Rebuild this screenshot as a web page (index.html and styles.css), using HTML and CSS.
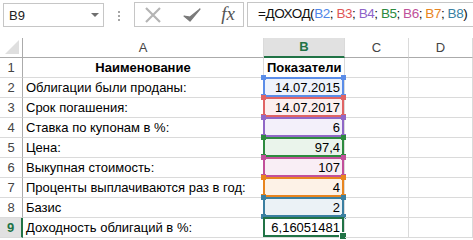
FILE: index.html
```html
<!DOCTYPE html>
<html lang="ru">
<head>
<meta charset="utf-8">
<link rel="stylesheet" href="styles.css">
</head>
<body>
<div class="fbar">
  <div class="namebox"><span>B9</span><span class="dd"></span></div>
  <div class="grip"><i></i><i></i><i></i></div>
  <div class="btns">
    <svg class="ic" width="20" height="20" viewBox="0 0 20 20"><path d="M3 3L17 17M17 3L3 17" stroke="#b4b4b4" stroke-width="2.2" fill="none"/></svg>
    <svg class="ic" width="20" height="20" viewBox="0 0 20 20"><path d="M2 11L8 16L18 4L8 12Z" fill="#7a7a7a" stroke="#7a7a7a" stroke-width="1.2" stroke-linejoin="round"/></svg>
    <span class="fx">fx</span>
  </div>
  <div class="finput">=ДОХОД(<span class="c1">B2</span>; <span class="c2">B3</span>; <span class="c3">B4</span>; <span class="c4">B5</span>; <span class="c5">B6</span>; <span class="c6">B7</span>; <span class="c7">B8</span>)</div>
</div>
<div class="sheet">
  <div class="ch corner"><span class="tri"></span></div>
  <div class="ch">A</div>
  <div class="ch sel">B</div>
  <div class="ch">C</div>
  <div class="ch">D</div>

  <div class="rh">1</div><div class="c bold ctr">Наименование</div><div class="c bold ctr">Показатели</div><div class="c"></div><div class="c"></div>
  <div class="rh">2</div><div class="c">Облигации были проданы:</div><div class="c num r r1">14.07.2015</div><div class="c"></div><div class="c"></div>
  <div class="rh">3</div><div class="c">Срок погашения:</div><div class="c num r r2">14.07.2017</div><div class="c"></div><div class="c"></div>
  <div class="rh">4</div><div class="c">Ставка по купонам в %:</div><div class="c num r r3">6</div><div class="c"></div><div class="c"></div>
  <div class="rh">5</div><div class="c">Цена:</div><div class="c num r r4">97,4</div><div class="c"></div><div class="c"></div>
  <div class="rh">6</div><div class="c">Выкупная стоимость:</div><div class="c num r r5">107</div><div class="c"></div><div class="c"></div>
  <div class="rh">7</div><div class="c">Проценты выплачиваются раз в год:</div><div class="c num r r6">4</div><div class="c"></div><div class="c"></div>
  <div class="rh">8</div><div class="c">Базис</div><div class="c num r r7">2</div><div class="c"></div><div class="c"></div>
  <div class="rh sel">9</div><div class="c">Доходность облигаций в %:</div><div class="c num act">6,16051481</div><div class="c"></div><div class="c"></div>
</div>
</body>
</html>
```
FILE: styles.css
```css
* { box-sizing: border-box; }
html, body { margin: 0; padding: 0; background: #fff; }
body {
  width: 473px; height: 240px; overflow: hidden;
  font-family: "Liberation Sans", Arial, sans-serif;
  font-size: 13px; color: #000;
}
.fbar { display: flex; align-items: flex-start; padding: 2px 0 0 3px; height: 38px; }
.namebox, .grip, .btns { flex-shrink: 0; }
.namebox {
  width: 101px; height: 24px; margin-top: 1px;
  border: 1px solid #c6c6c6; display: flex; align-items: center;
  justify-content: space-between; padding: 0 4px 0 5px; font-size: 13px; color: #222;
}
.dd { width: 0; height: 0; border-left: 4px solid transparent; border-right: 4px solid transparent; border-top: 4px solid #6f6f6f; }
.grip { width: 30px; display: flex; flex-direction: column; align-items: center; gap: 2px; padding-top: 9px; }
.grip i { width: 2px; height: 2px; background: #a6a6a6; display: block; }
.btns {
  width: 110px; height: 25px; border: 1px solid #c6c6c6;
  display: flex; align-items: center; justify-content: space-between; padding: 0 8px 0 8px;
}
.fx { font-family: "Liberation Serif", serif; font-style: italic; font-size: 19px; color: #555; margin-top: -2px; }
.finput {
  flex: 1 1 auto; min-width: 0; overflow: hidden; height: 25px; margin-left: 3px;
  border: 1px solid #c6c6c6; border-right: 0;
  padding: 3px 0 0 10px; font-size: 13.5px; letter-spacing: -0.45px; color: #111; white-space: nowrap;
}
.c1 { color: #4f86e8; } .c2 { color: #e05555; } .c3 { color: #8e63c8; }
.c4 { color: #2b8a3e; } .c5 { color: #c0509a; } .c6 { color: #e88421; } .c7 { color: #3a7fa3; }

.sheet {
  display: grid;
  grid-template-columns: 23px 241px 81px 64px 64px;
  grid-template-rows: 20px repeat(9, 20px);
}
.ch {
  border-right: 1px solid #dadada; border-bottom: 1px solid #ababab;
  text-align: center; font-size: 13px; color: #444; line-height: 19px; position: relative;
}
.ch.sel { background: #e1e1e1; color: #217346; font-weight: bold; border-bottom: 2px solid #217346; line-height: 18px; }
.corner { border-right: 1px solid #ababab; }
.tri {
  position: absolute; right: 3px; bottom: 3px; width: 0; height: 0;
  border-left: 14px solid transparent; border-bottom: 14px solid #dfdfdf;
}
.rh {
  border-right: 1px solid #ababab; border-bottom: 1px solid #dadada;
  text-align: center; color: #444; line-height: 19px; font-size: 13px;
}
.rh.sel { background: #e1e1e1; color: #217346; font-weight: bold; border-right: 2px solid #217346; }
.c {
  border-right: 1px solid #dadada; border-bottom: 1px solid #dadada;
  padding: 0 3px; line-height: 19px; white-space: nowrap; overflow: visible; position: relative;
}
.bold { font-weight: bold; }
.ctr { text-align: center; }
.num { text-align: right; padding-right: 4px; }
.r { --c: #4f86e8; background: #eef3fc; }
.r::before {
  content: ""; position: absolute; top: -1px; left: -1px; right: 0; bottom: 0;
  border: 2px solid var(--c); pointer-events: none;
}
.r::after {
  content: ""; position: absolute; top: -3px; left: -3px; right: -2px; bottom: -2px;
  background:
    linear-gradient(var(--c), var(--c)) left top / 5px 5px no-repeat,
    linear-gradient(var(--c), var(--c)) right top / 5px 5px no-repeat,
    linear-gradient(var(--c), var(--c)) left bottom / 5px 5px no-repeat,
    linear-gradient(var(--c), var(--c)) right bottom / 5px 5px no-repeat;
  pointer-events: none;
}
.r1 { --c: #5b8de8; background: #eef3fc; }
.r2 { --c: #e06464; background: #fcefef; }
.r3 { --c: #9068c6; background: #f3f0fa; }
.r4 { --c: #2e8b3f; background: #eaf4eb; }
.r5 { --c: #c2509b; background: #f9eef5; }
.r6 { --c: #e8851f; background: #fdf2e7; }
.r7 { --c: #3b7fa1; background: #ebf2f6; }
.act::before {
  content: ""; position: absolute; top: -1px; left: -1px; right: 0; bottom: 0;
  border: 2px solid #217346;
}
.act::after {
  content: ""; position: absolute; right: -3px; bottom: -3px; width: 6px; height: 6px;
  background: #217346; border: 1px solid #fff;
}
```
